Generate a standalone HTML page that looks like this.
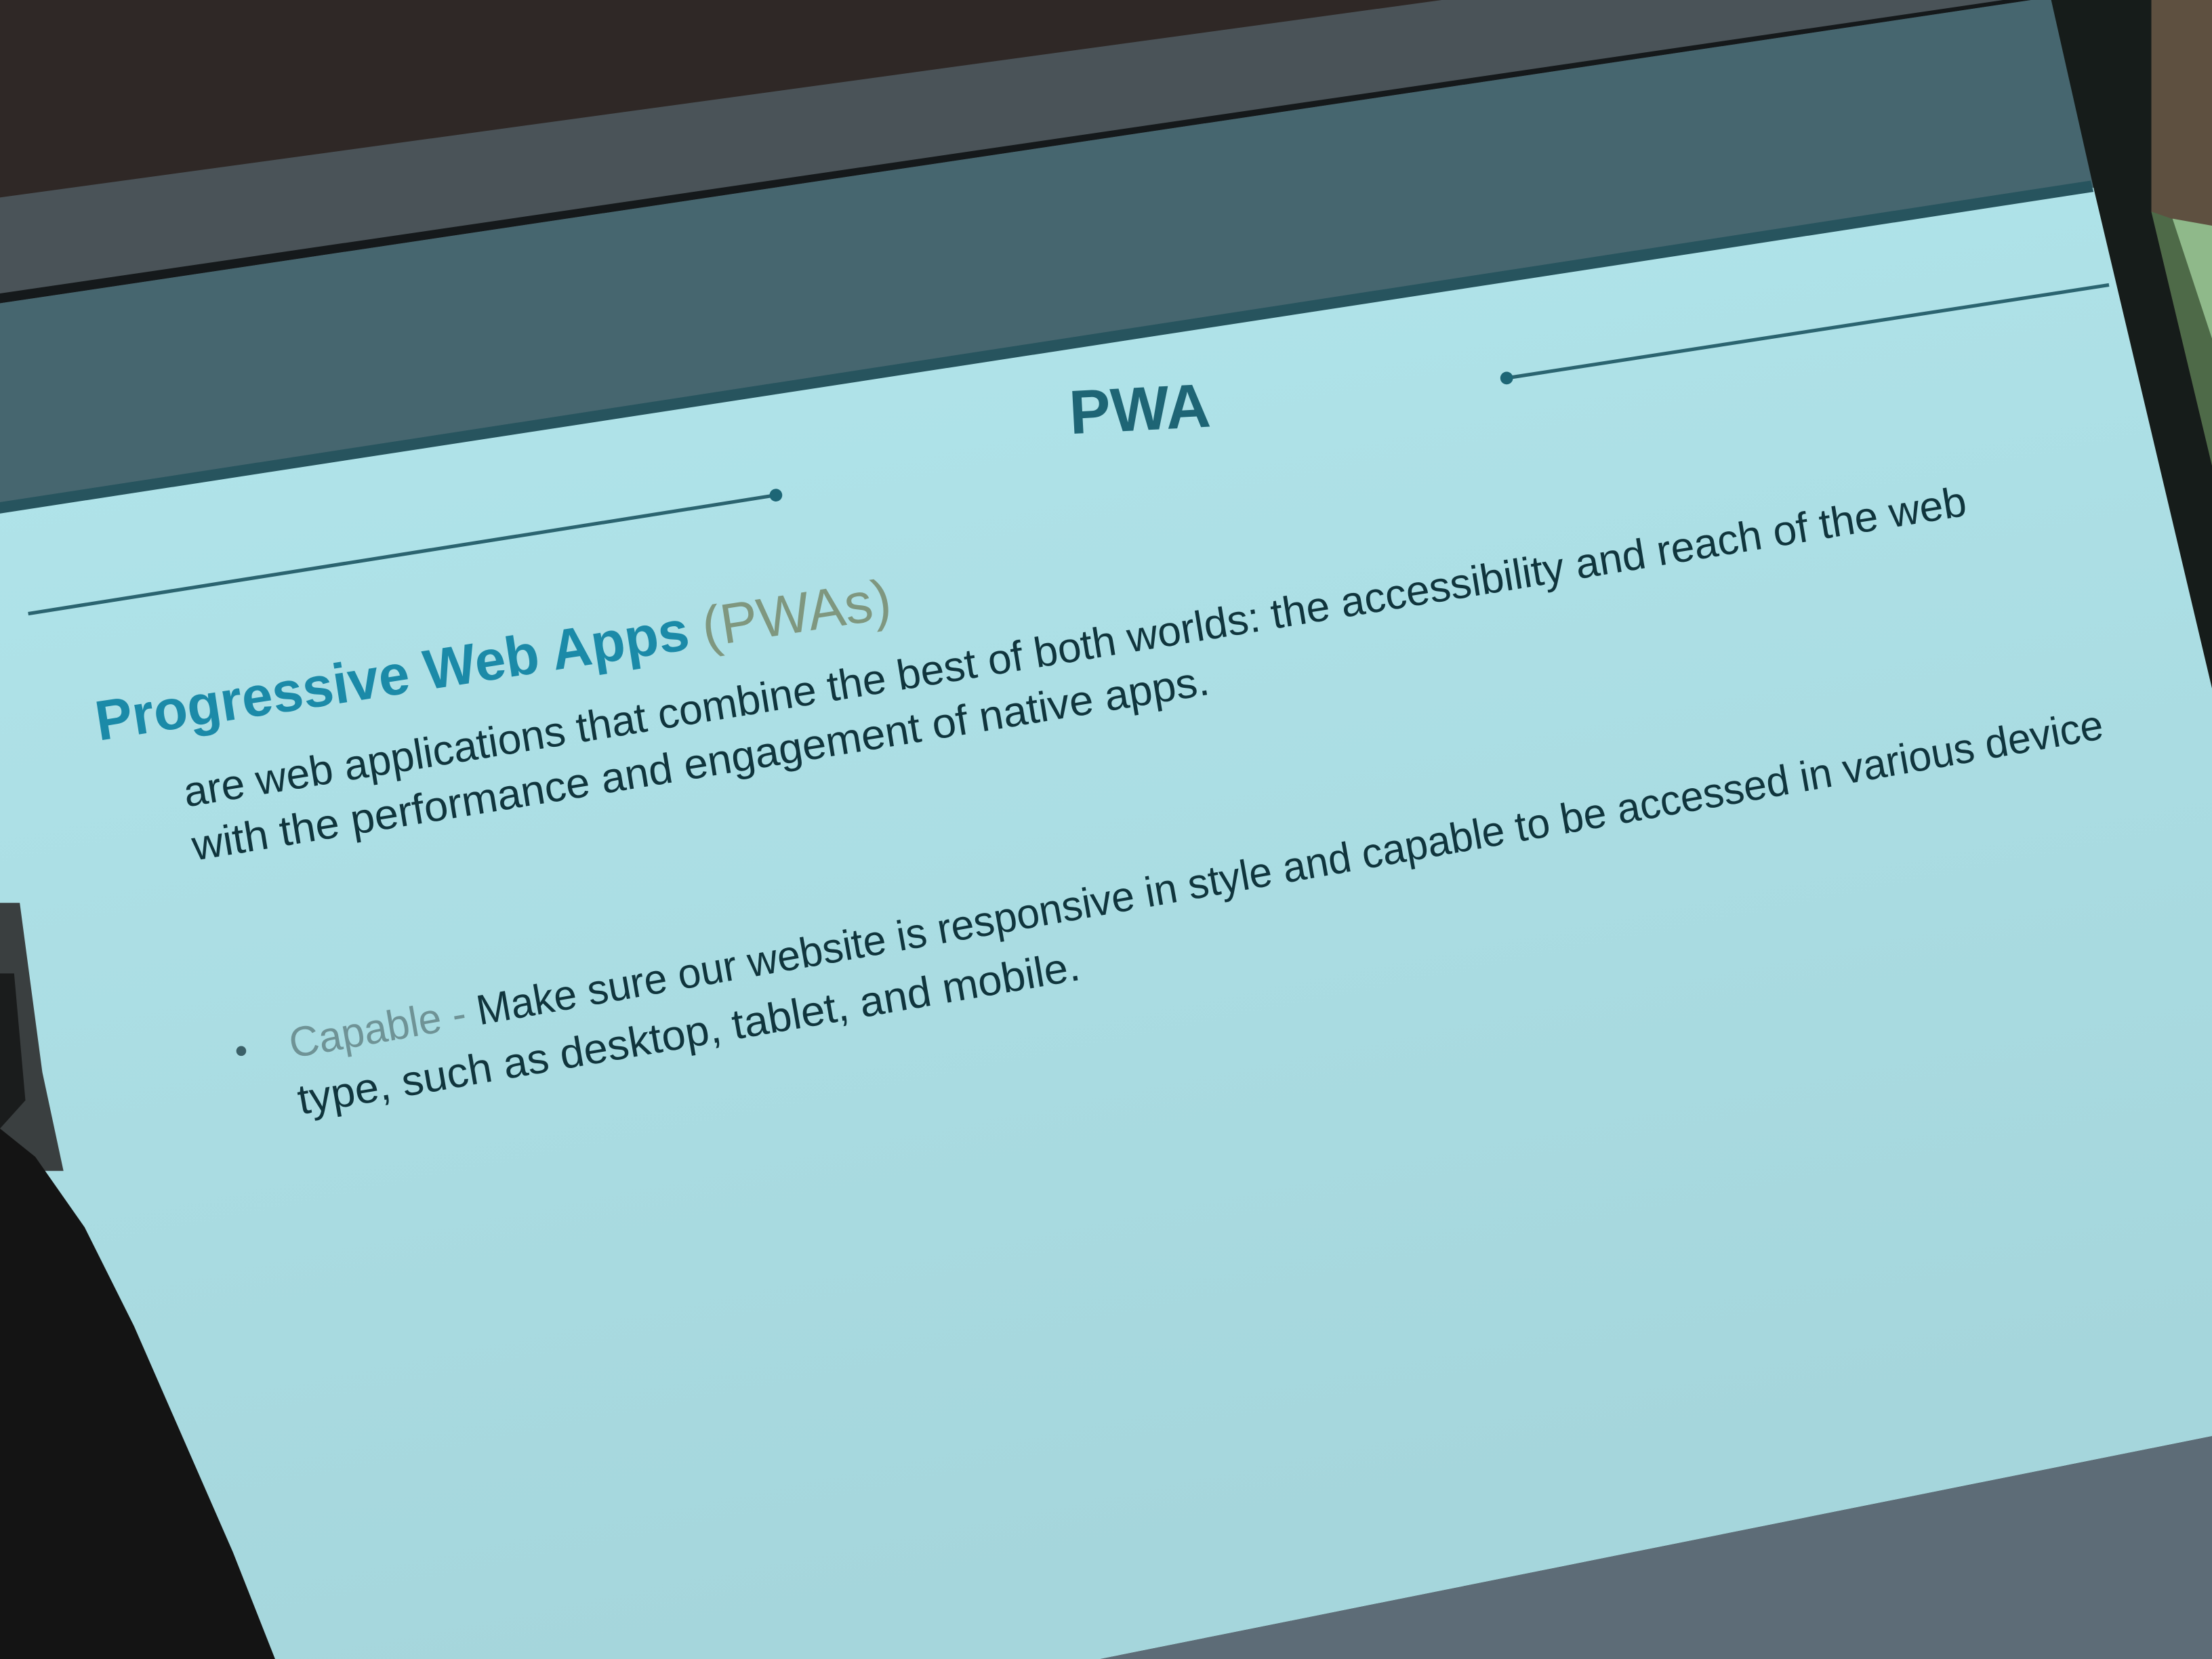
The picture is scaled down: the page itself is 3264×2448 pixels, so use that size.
<!DOCTYPE html>
<html><head><meta charset="utf-8"><style>
html,body{margin:0;padding:0;background:#2e2624;}
svg{display:block;}
text{font-family:"Liberation Sans",sans-serif;}
</style></head><body>
<svg width="3264" height="2448" viewBox="0 0 1568 1176" preserveAspectRatio="none" xmlns="http://www.w3.org/2000/svg">
<defs>
<linearGradient id="sl" x1="0" y1="0" x2="0.3" y2="1">
<stop offset="0" stop-color="#b2e6ec"/><stop offset="1" stop-color="#a5d6dc"/>
</linearGradient>
</defs>
<rect width="1568" height="1176" fill="#2f2826"/>
<!-- right brown background -->
<rect x="1440" y="0" width="128" height="600" fill="#5e5040"/>
<!-- gray housing band -->
<polygon points="0,140 1460,-60 1460,0 1484,133 0,400" fill="#4a5358"/>
<polygon points="0,208 1420,0 1440,0 0,215" fill="#15191b"/>
<!-- header slate area -->
<polygon points="0,215 1440,0 1456,0 1484,133 0,361" fill="#46666f"/>
<!-- dark frame & green strip -->
<polygon points="1454,0 1525,0 1525,150 1568,330 1568,488 1484,133" fill="#161c1a"/>
<polygon points="1525,150 1568,165 1568,330" fill="#4e6a48"/>
<polygon points="1540,155 1568,160 1568,240" fill="#8fb98a"/>
<!-- slide -->
<polygon points="0,361 1484,133 1568,488 1568,1018 780,1176 0,1176" fill="url(#sl)"/>
<polygon points="0,356 1482,128 1484,136 0,364" fill="#27545e"/>
<!-- bottom gray -->
<polygon points="780,1176 1568,1018 1568,1176" fill="#5d6c77"/>
<!-- left dark frame & hair -->
<polygon points="0,640 14,640 30,760 45,830 0,830" fill="#3a3f40"/>
<polygon points="0,690 10,690 18,780 0,800" fill="#1a1c1c"/>
<polygon points="0,800 25,820 60,870 95,940 130,1020 165,1100 195,1176 0,1176" fill="#141414"/>
<!-- decorative lines -->
<line x1="1068" y1="268" x2="1495" y2="202" stroke="#2b6470" stroke-width="2.5"/>
<circle cx="1068" cy="268" r="4.5" fill="#1d6676"/>
<line x1="20" y1="435" x2="550" y2="351" stroke="#2b6470" stroke-width="2.5"/>
<circle cx="550" cy="351" r="4.5" fill="#1d6676"/>
<!-- title -->
<text x="808" y="305" font-size="44" font-weight="bold" fill="#1e6575" text-anchor="middle" transform="rotate(-3 808 290)">PWA</text>
<!-- heading -->
<g transform="rotate(-8.8 70 525)">
<text x="70" y="525" font-size="40" font-weight="bold" fill="#1b8aa8" textLength="425" lengthAdjust="spacingAndGlyphs">Progressive Web Apps</text>
<text x="505" y="525" font-size="40" fill="#7f977f" textLength="135" lengthAdjust="spacingAndGlyphs">(PWAs)</text>
</g>
<!-- body -->
<g transform="rotate(-9.3 132 572)">
<text x="132" y="572" font-size="30" fill="#10353d" textLength="1280" lengthAdjust="spacingAndGlyphs">are web applications that combine the best of both worlds: the accessibility and reach of the web</text>
</g>
<g transform="rotate(-9.3 138 610)">
<text x="138" y="610" font-size="30" fill="#10353d" textLength="730" lengthAdjust="spacingAndGlyphs">with the performance and engagement of native apps.</text>
</g>
<circle cx="171" cy="745" r="3.5" fill="#3b6068"/>
<g transform="rotate(-10 207 750)">
<text x="207" y="750" font-size="30" fill="#10353d" textLength="1305" lengthAdjust="spacingAndGlyphs"><tspan fill="#6f9396">Capable - </tspan>Make sure our website is responsive in style and capable to be accessed in various device</text>
</g>
<g transform="rotate(-9.8 213 790)">
<text x="213" y="790" font-size="30" fill="#10353d" textLength="562" lengthAdjust="spacingAndGlyphs">type, such as desktop, tablet, and mobile.</text>
</g>
</svg>
</body></html>
